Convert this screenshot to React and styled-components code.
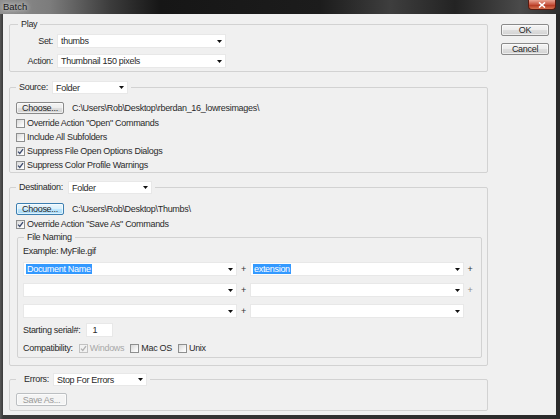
import React from "react";
import styled, { createGlobalStyle } from "styled-components";

const FONT = `"Liberation Sans", Arial, sans-serif`;

const GlobalStyle = createGlobalStyle`
  * { box-sizing: border-box; }
  html, body { margin: 0; padding: 0; }
  body { width: 560px; height: 419px; overflow: hidden; background: #2e2e2e; }
`;

const Window = styled.div`
  width: 560px;
  height: 419px;
  display: flex;
  flex-direction: column;
  font-family: ${FONT};
  font-size: 9px;
  letter-spacing: -0.3px;
  color: #2a2a2a;
`;

const TitleBar = styled.div`
  height: 14px;
  flex: none;
  display: flex;
  align-items: center;
  justify-content: space-between;
  padding: 0 3px 0 3px;
  background: linear-gradient(
    90deg,
    #8e8e8e 0px,
    #7c7c7c 50px,
    #3c3c3c 110px,
    #161616 160px,
    #1c1c1c 320px,
    #3e3e3e 390px,
    #232323 455px,
    #4a4a4a 520px,
    #2e2e2e 560px
  );
`;

const Title = styled.span`
  color: #1a1a1a;
  font-size: 9.5px;
  line-height: 12px;
  letter-spacing: 0;
  text-shadow: 0 0 4px #d8d8d8, 0 0 6px #cfcfcf;
`;

const CloseBtn = styled.span`
  width: 28px;
  height: 10px;
  margin-top: -4px;
  margin-right: 1px;
  display: flex;
  align-items: center;
  justify-content: center;
  border: 1px solid #5a1a10;
  border-top: none;
  border-radius: 0 0 4px 4px;
  background: linear-gradient(#e8a493, #c7533e 50%, #b1311c 51%, #d4714f);
`;

const Frame = styled.div`
  flex: 1;
  display: flex;
  padding: 0 4px 4px 3px;
  background: linear-gradient(90deg, #575757 0px, #3a3a3a 3px, #2a2a2a 100%);
`;

const Client = styled.div`
  flex: 1;
  display: flex;
  padding: 4px 7px 0 6px;
  background: #f0f0f0;
`;

const MainCol = styled.div`
  width: 479px;
  flex: none;
  display: flex;
  flex-direction: column;
`;

const SideCol = styled.div`
  width: 48px;
  margin-left: 13px;
  padding-top: 6px;
  display: flex;
  flex-direction: column;
  gap: 7px;
`;

const Group = styled.fieldset`
  margin: ${(p) => p.$mt || 0}px ${(p) => p.$mr || 0}px 0 ${(p) => p.$ml || 0}px;
  padding: 0;
  min-width: 0;
  border: 1px solid #d2d2d2;
  border-radius: 2px;
`;

const Legend = styled.legend`
  margin-left: ${(p) => p.$inset}px;
  padding: 0 3px;
  height: ${(p) => p.$h}px;
  line-height: ${(p) => p.$h}px;
`;

const LegendRow = styled.div`
  display: flex;
  align-items: center;
  gap: 4px;
  height: 100%;
`;

const LegendLabel = styled.span`
  width: ${(p) => p.$w}px;
  text-align: ${(p) => (p.$right ? "right" : "left")};
  white-space: nowrap;
`;

const Body = styled.div`
  padding: ${(p) => p.$pad};
  display: flex;
  flex-direction: column;
  align-items: flex-start;
`;

const PlayGrid = styled.div`
  display: grid;
  grid-template-columns: 43px 169px;
  column-gap: 4px;
  row-gap: 6px;
  align-items: center;
`;

const RightLabel = styled.span`
  text-align: right;
  white-space: nowrap;
`;

const SelectBox = styled.div`
  width: ${(p) => p.$w}px;
  height: ${(p) => p.$h || 14}px;
  flex: none;
  display: flex;
  align-items: center;
  justify-content: space-between;
  padding: 0 3px 0 3px;
  background: #fff;
  border: 1px solid #e8e8e8;
  white-space: nowrap;
  line-height: 10px;
`;

const Hilite = styled.span`
  background: #3399ff;
  color: #fff;
  padding: 0 1px;
  margin-left: -1px;
`;

const Arrow = () => (
  <svg width="5" height="3" viewBox="0 0 5 3">
    <path d="M0 0H5L2.5 3Z" fill="#111" />
  </svg>
);

const Select = ({ w, h, children }) => (
  <SelectBox $w={w} $h={h}>
    <span>{children}</span>
    <Arrow />
  </SelectBox>
);

const Button = styled.div`
  width: ${(p) => p.$w}px;
  height: ${(p) => p.$h || 12}px;
  flex: none;
  display: flex;
  align-items: center;
  justify-content: center;
  border: 1px solid ${(p) => (p.$focus ? "#3c7fb1" : p.$disabled ? "#bcbfc2" : "#8a8a8a")};
  border-radius: 2px;
  color: ${(p) => (p.$disabled ? "#9a9a9a" : "#262626")};
  background: ${(p) =>
    p.$focus
      ? "linear-gradient(#eaf6fd, #d9f0fc 50%, #bee6fd 51%, #a7d9f5)"
      : p.$disabled
      ? "#f4f4f4"
      : "linear-gradient(#f4f4f4, #ececec 50%, #dedede 51%, #d2d2d2)"};
  box-shadow: inset 0 0 0 1px rgba(255, 255, 255, 0.6);
  line-height: 10px;
`;

const Row = styled.div`
  display: flex;
  align-items: center;
  gap: ${(p) => p.$gap || 0}px;
  height: ${(p) => p.$h || 14}px;
  margin-top: ${(p) => p.$mt || 0}px;
  white-space: nowrap;
`;

const Box = styled.span`
  width: 9px;
  height: 9px;
  flex: none;
  display: flex;
  align-items: center;
  justify-content: center;
  border: 1px solid ${(p) => (p.$disabled ? "#c2c2c2" : "#8e8f8f")};
  background: ${(p) =>
    p.$disabled ? "#f2f2f2" : "linear-gradient(135deg, #d8d8d8, #f7f7f7 70%, #fff)"};
`;

const CheckLabel = styled.span`
  color: ${(p) => (p.$disabled ? "#a8a8a8" : "inherit")};
`;

const Check = ({ checked, disabled, children }) => (
  <Row $gap={2} as="span">
    <Box $disabled={disabled}>
      {checked && (
        <svg width="7" height="7" viewBox="0 0 7 7">
          <path
            d="M1 3.6 L2.8 5.5 L6 1.2"
            fill="none"
            stroke={disabled ? "#b0b0b0" : "#3d4b6e"}
            strokeWidth="1.3"
          />
        </svg>
      )}
    </Box>
    <CheckLabel $disabled={disabled}>{children}</CheckLabel>
  </Row>
);

const NameGrid = styled.div`
  margin-top: 5px;
  display: grid;
  grid-template-columns: 214px 13px 214px 12px;
  row-gap: 7px;
  align-items: center;
`;

const Plus = styled.span`
  text-align: center;
  line-height: 10px;
  color: ${(p) => (p.$faint ? "#8a8a8a" : "#333")};
`;

const Input = styled.div`
  width: 27px;
  height: 14px;
  background: #fff;
  border: 1px solid #e8e8e8;
  padding-left: 5px;
  line-height: 12px;
`;

const FileNaming = styled(Group)`
  align-self: stretch;
`;

export default function App() {
  return (
    <>
      <GlobalStyle />
      <Window>
        <TitleBar>
          <Title>Batch</Title>
          <CloseBtn>
            <svg width="8" height="6" viewBox="0 0 8 6">
              <path d="M1 0.5 L7 5.5 M7 0.5 L1 5.5" stroke="#fff" strokeWidth="1.6" />
            </svg>
          </CloseBtn>
        </TitleBar>
        <Frame>
          <Client>
            <MainCol>
              <Group>
                <Legend $inset={8} $h={12}>Play</Legend>
                <Body $pad="4px 0 3px 0">
                  <PlayGrid>
                    <RightLabel>Set:</RightLabel>
                    <Select w={169}>thumbs</Select>
                    <RightLabel>Action:</RightLabel>
                    <Select w={169}>Thumbnail 150 pixels</Select>
                  </PlayGrid>
                </Body>
              </Group>

              <Group $mt={9}>
                <Legend $inset={6} $h={13}>
                  <LegendRow>
                    <LegendLabel $w={29}>Source:</LegendLabel>
                    <Select w={76} h={13}>Folder</Select>
                  </LegendRow>
                </Legend>
                <Body $pad="8px 0 0 6px">
                  <Row $gap={8} $h={12}>
                    <Button $w={48}>Choose...</Button>
                    <span>C:\Users\Rob\Desktop\rberdan_16_lowresimages\</span>
                  </Row>
                  <Row $mt={2} as="div">
                    <Check>Override Action "Open" Commands</Check>
                  </Row>
                  <Check>Include All Subfolders</Check>
                  <Check checked>Suppress File Open Options Dialogs</Check>
                  <Check checked>Suppress Color Profile Warnings</Check>
                </Body>
              </Group>

              <Group $mt={8}>
                <Legend $inset={6} $h={13}>
                  <LegendRow>
                    <LegendLabel $w={45}>Destination:</LegendLabel>
                    <Select w={84} h={13}>Folder</Select>
                  </LegendRow>
                </Legend>
                <Body $pad="9px 5px 7px 6px">
                  <Row $gap={8} $h={12}>
                    <Button $w={48} $focus>Choose...</Button>
                    <span>C:\Users\Rob\Desktop\Thumbs\</span>
                  </Row>
                  <Row $mt={2} as="div">
                    <Check checked>Override Action "Save As" Commands</Check>
                  </Row>
                  <FileNaming $ml={1}>
                    <Legend $inset={6} $h={12}>File Naming</Legend>
                    <Body $pad="2px 0 3px 5px">
                      <Row $h={12}>Example: MyFile.gif</Row>
                      <NameGrid>
                        <Select w={214}><Hilite>Document Name</Hilite></Select>
                        <Plus>+</Plus>
                        <Select w={214}><Hilite>extension</Hilite></Select>
                        <Plus>+</Plus>
                        <Select w={214} />
                        <Plus>+</Plus>
                        <Select w={214} />
                        <Plus $faint>+</Plus>
                        <Select w={214} />
                        <Plus>+</Plus>
                        <Select w={214} />
                        <span />
                      </NameGrid>
                      <Row $mt={5} $gap={6}>
                        <span>Starting serial#:</span>
                        <Input>1</Input>
                      </Row>
                      <Row $mt={5} $h={12} $gap={6}>
                        <span>Compatibility:</span>
                        <Check checked disabled>Windows</Check>
                        <Check>Mac OS</Check>
                        <Check>Unix</Check>
                      </Row>
                    </Body>
                  </FileNaming>
                </Body>
              </Group>

              <Group $mt={7}>
                <Legend $inset={6} $h={13}>
                  <LegendRow>
                    <LegendLabel $w={30} $right>Errors:</LegendLabel>
                    <Select w={94} h={13}>Stop For Errors</Select>
                  </LegendRow>
                </Legend>
                <Body $pad="7px 0 4px 6px">
                  <Button $w={51} $h={13} $disabled>Save As...</Button>
                </Body>
              </Group>
            </MainCol>
            <SideCol>
              <Button $w={48}>OK</Button>
              <Button $w={48}>Cancel</Button>
            </SideCol>
          </Client>
        </Frame>
      </Window>
    </>
  );
}
